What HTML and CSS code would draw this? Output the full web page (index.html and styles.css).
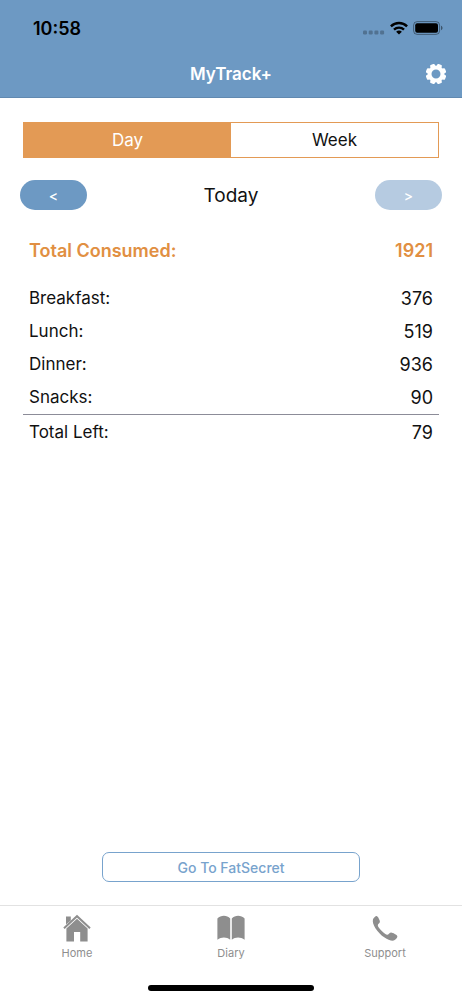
FILE: index.html
```html
<!DOCTYPE html>
<html lang="en">

<head>
    <meta charset="UTF-8">
    <meta name="viewport" content="width=device-width, initial-scale=1.0">
    <title>MyTrack+</title>
    <link rel="stylesheet" href="styles.css">
</head>

<body>
    <header>
        <div class="status-bar">
            <span class="time">10:58</span>
            <div class="status-icons">
                <svg width="22" height="5" viewBox="0 0 22 5" fill="#000" opacity="0.25">
                    <rect x="0" y="0.5" width="4" height="4" rx="1.2" />
                    <rect x="5.7" y="0.5" width="4" height="4" rx="1.2" />
                    <rect x="11.4" y="0.5" width="4" height="4" rx="1.2" />
                    <rect x="17.1" y="0.5" width="4" height="4" rx="1.2" />
                </svg>
                <svg width="18" height="14" viewBox="0 0 18 14" fill="none" stroke="#000" stroke-width="2.4">
                    <path d="M0.9 5.3a11.6 11.6 0 0 1 16.2 0" />
                    <path d="M4 8.6a7.2 7.2 0 0 1 10 0" />
                    <path d="M9 13.6L6.1 10.8a4.2 4.2 0 0 1 5.8 0z" fill="#000" stroke="none" />
                </svg>
                <svg width="30" height="14" viewBox="0 0 30 14">
                    <rect x="0.6" y="0.6" width="26" height="12.8" rx="3.6" fill="none" stroke="#000" stroke-opacity="0.4" />
                    <rect x="2.2" y="2.2" width="22.8" height="9.6" rx="2" />
                    <path d="M28 4.8c2 .7 2 3.7 0 4.4z" fill-opacity="0.45" />
                </svg>
            </div>
        </div>
        <div class="title-bar">
            <h1>MyTrack+</h1>
            <button class="settings" type="button" aria-label="Settings">
                <svg width="20" height="20" viewBox="-10 -10 20 20">
                    <circle r="6.4" fill="none" stroke="#fff" stroke-width="3.8" />
                    <g fill="#fff" transform="rotate(22.5)">
                        <path id="tooth" d="M-3 -7L-2.3 -9.7Q-2.1 -10.3 -1.4 -10.3H1.4Q2.1 -10.3 2.3 -9.7L3 -7z" />
                        <use href="#tooth" transform="rotate(45)" />
                        <use href="#tooth" transform="rotate(90)" />
                        <use href="#tooth" transform="rotate(135)" />
                        <use href="#tooth" transform="rotate(180)" />
                        <use href="#tooth" transform="rotate(225)" />
                        <use href="#tooth" transform="rotate(270)" />
                        <use href="#tooth" transform="rotate(315)" />
                    </g>
                </svg>
            </button>
        </div>
    </header>

    <main>
        <div class="segments">
            <button class="segment active" type="button">Day</button>
            <button class="segment" type="button">Week</button>
        </div>

        <div class="date-nav">
            <button class="pill" type="button" aria-label="Previous day">&lt;</button>
            <h2>Today</h2>
            <button class="pill" type="button" aria-label="Next day" disabled>&gt;</button>
        </div>

        <table>
            <thead>
                <tr>
                    <th scope="row">Total Consumed:</th>
                    <td>1921</td>
                </tr>
            </thead>
            <tbody>
                <tr>
                    <th scope="row">Breakfast:</th>
                    <td>376</td>
                </tr>
                <tr>
                    <th scope="row">Lunch:</th>
                    <td>519</td>
                </tr>
                <tr>
                    <th scope="row">Dinner:</th>
                    <td>936</td>
                </tr>
                <tr>
                    <th scope="row">Snacks:</th>
                    <td>90</td>
                </tr>
            </tbody>
            <tfoot>
                <tr>
                    <th scope="row">Total Left:</th>
                    <td>79</td>
                </tr>
            </tfoot>
        </table>

        <button class="outline" type="button">Go To FatSecret</button>
    </main>

    <footer>
        <nav>
            <a href="#home">
                <svg width="28" height="28" viewBox="0 0 28 28">
                    <path d="M3 2.4h4.8v4L3 10.6z" />
                    <path d="M1 14.2L14 2.2L27 14.2" fill="none" stroke="#8e8e8e" stroke-width="2" />
                    <path d="M14 4.8L24.6 14.4V27.4H17.2V18H11V27.4H3.4V14.4z" />
                </svg>
                Home
            </a>
            <a href="#diary">
                <svg width="28" height="28" viewBox="0 0 28 28">
                    <path d="M0.4 4.6C3.8 0.8 10 0.8 13.2 4.6V25.8C9.6 22.6 4.4 22.6 0.4 25.8z" />
                    <path d="M27.6 4.6C24.2 0.8 18 0.8 14.8 4.6V25.8C18.4 22.6 23.6 22.6 27.6 25.8z" />
                </svg>
                Diary
            </a>
            <a href="#support">
                <svg width="28" height="28" viewBox="0 0 28 28">
                    <path d="M2 5.2C2.4 4 4.4 2.2 5.6 2.1C6.8 2.1 8.8 6.2 8.9 7.6C9 9.4 6.8 9.8 6.8 11.2C6.9 13.8 13.6 20.4 16.4 20.8C17.9 21 18.4 18.6 20.2 18.6C21.6 18.7 26.2 21 26.4 22.3C26.5 23.6 24.4 26 22.8 26.6C20.8 27.3 16.4 25.6 13.6 23.6C10 21.2 6.6 17.6 4.4 14.2C2.4 11 1.3 7.6 2 5.2z" />
                </svg>
                Support
            </a>
        </nav>
        <div class="home-indicator"></div>
    </footer>
</body>

</html>
```

FILE: styles.css
```css
* {
    box-sizing: border-box;
}

body {
    display: flex;
    flex-direction: column;
    min-height: 100vh;
    margin: 0;
    font-family: Inter, 'Liberation Sans', sans-serif;
    font-size: 17px;
    color: #111;
    background-color: #fff;
}

button {
    padding: 0;
    border: none;
    font: inherit;
    color: inherit;
    background: none;
}

svg {
    display: block;
}

header {
    background-color: #6d99c3;
    border-bottom: 1px solid #6189b0;
}

.status-bar {
    display: flex;
    justify-content: space-between;
    align-items: center;
    height: 49px;
    padding: 8px 19px 0 33px;
}

.time {
    font-size: 18px;
    font-weight: 600;
    color: #000;
}

.status-icons {
    display: flex;
    align-items: flex-end;
    gap: 5px;
    padding-bottom: 2px;
}

.title-bar {
    display: grid;
    grid-template-columns: 1fr auto 1fr;
    align-items: center;
    height: 48px;
    padding: 1px 16px 0;
    color: #fff;
}

.title-bar h1 {
    grid-column: 2;
    margin: 0;
    font-size: 17px;
    font-weight: 600;
}

.settings {
    justify-self: end;
}

main {
    display: flex;
    flex: 1;
    flex-direction: column;
    padding: 24px 20px 23px;
}

.segments {
    display: flex;
    height: 36px;
    margin: 0 3px;
    border: 1px solid #e39a55;
}

.segment {
    flex: 1;
}

.segment.active {
    color: #fff;
    background-color: #e39a55;
}

.date-nav {
    display: flex;
    justify-content: space-between;
    align-items: center;
    margin: 22px 0 20px;
}

.date-nav h2 {
    margin: 0;
    font-size: 19px;
    font-weight: 400;
}

.pill {
    width: 67px;
    height: 30px;
    border-radius: 15px;
    font-size: 14px;
    font-weight: 500;
    color: #fff;
    background-color: #6d99c3;
}

.pill:disabled {
    background-color: #b6cbe1;
}

table {
    margin: 0 3px;
    border-collapse: collapse;
    line-height: 21px;
}

th,
td {
    padding: 6px;
    font-weight: 400;
    text-align: left;
}

td {
    font-size: 18px;
    text-align: right;
}

thead th,
thead td {
    padding: 10px 6px 21px;
    font-size: 18px;
    font-weight: 600;
    color: #e18f42;
}

tfoot {
    border-top: 1px solid #8c8c98;
}

tfoot th,
tfoot td {
    padding-top: 7px;
}

.outline {
    align-self: center;
    width: 61%;
    height: 30px;
    margin-top: auto;
    border: 1px solid #78a3cd;
    border-radius: 7px;
    font-size: 14px;
    font-weight: 500;
    color: #78a3cd;
}

footer {
    border-top: 1px solid #e2e2e2;
}

nav {
    display: flex;
}

nav a {
    display: flex;
    flex: 1;
    flex-direction: column;
    align-items: center;
    gap: 3px;
    padding-top: 8px;
    font-size: 11px;
    line-height: 16px;
    color: #8e8e8e;
    text-decoration: none;
    fill: #8e8e8e;
}

.home-indicator {
    width: 36%;
    height: 6px;
    margin: 24px auto 9px;
    border-radius: 3px;
    background-color: #000;
}
```
